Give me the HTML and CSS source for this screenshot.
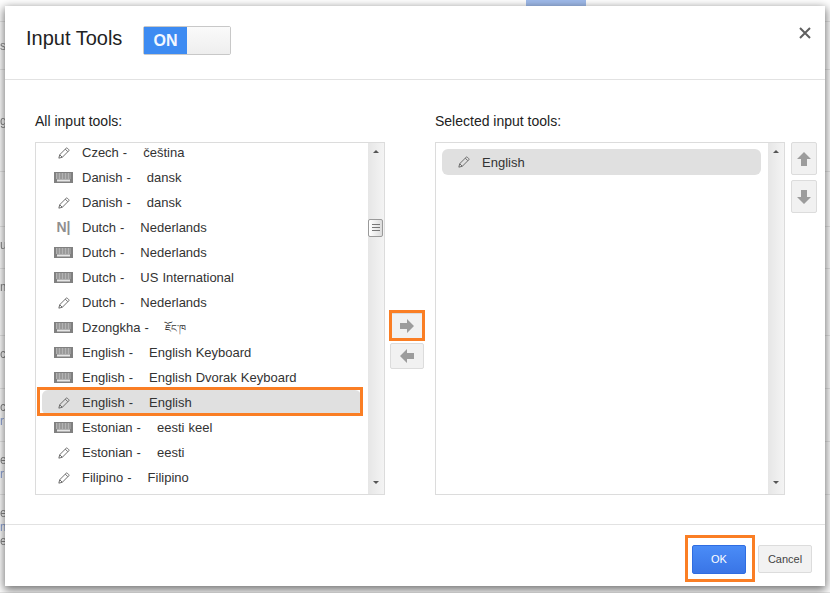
FILE: index.html
```html
<!DOCTYPE html>
<html>
<head>
  <title>Input Tools</title>
  <link rel="stylesheet" href="styles.css">
</head>
<body>
  <svg class="icon-defs" width="0" height="0">
    <symbol id="pencil" viewBox="0 0 14 14">
      <path d="M1 13l1-4 7.500-7.500a1 1 0 0 1 1.500 0l1.500 1.500a1 1 0 0 1 0 1.500L5 12zM2 9l3 3M8.500 2.500l3 3" fill="none" stroke="#666" stroke-width="1.100"/>
    </symbol>
    <symbol id="keyboard" viewBox="0 0 19 11">
      <rect width="19" height="11" fill="#808080"/>
      <path d="M2 2h15M2 4h15M2 6h15" stroke="#e6e6e6" stroke-dasharray="1 .5"/>
      <path d="M3 8.500h13" stroke="#e6e6e6" stroke-width="2"/>
    </symbol>
    <symbol id="arrow" viewBox="0 0 14 14">
      <path d="M0 4h7V0l7 7-7 7v-4H0z" fill="#9c9c9c"/>
    </symbol>
  </svg>

  <div class="backdrop">
    <div class="backdrop-row"></div>
    <div class="backdrop-row backdrop-mid">s</div>
    <div class="backdrop-row backdrop-mid">g</div>
    <div class="backdrop-row"></div>
    <div class="backdrop-row">u</div>
    <div class="backdrop-row">m</div>
    <div class="backdrop-row">c</div>
    <div class="backdrop-row">c<span class="backdrop-link">r</span></div>
    <div class="backdrop-row">e<span class="backdrop-link">r</span></div>
    <div class="backdrop-row">e<span class="backdrop-link">m</span>e</div>
  </div>
  <div class="backdrop-button"></div>

  <div class="dialog">
    <div class="dialog-header">
      <div class="dialog-title">Input Tools</div>
      <div class="toggle">
        <span class="toggle-on">ON</span>
        <span class="toggle-off"></span>
      </div>
      <svg class="close-icon" width="12" height="12" viewBox="0 0 12 12">
        <path d="M1 1l10 10M11 1L1 11" stroke="#5f5f5f" stroke-width="2"/>
      </svg>
    </div>

    <div class="dialog-body">
      <div class="column">
        <div class="column-label">All input tools:</div>
        <div class="list-box">
          <div class="list list-all">
            <div class="row"><svg class="pencil"><use href="#pencil"/></svg><span class="row-text">Czech -    čeština</span></div>
            <div class="row"><svg class="keyboard"><use href="#keyboard"/></svg><span class="row-text">Danish -    dansk</span></div>
            <div class="row"><svg class="pencil"><use href="#pencil"/></svg><span class="row-text">Danish -    dansk</span></div>
            <div class="row"><span class="ime-icon">N|</span><span class="row-text">Dutch -    Nederlands</span></div>
            <div class="row"><svg class="keyboard"><use href="#keyboard"/></svg><span class="row-text">Dutch -    Nederlands</span></div>
            <div class="row"><svg class="keyboard"><use href="#keyboard"/></svg><span class="row-text">Dutch -    US International</span></div>
            <div class="row"><svg class="pencil"><use href="#pencil"/></svg><span class="row-text">Dutch -    Nederlands</span></div>
            <div class="row"><svg class="keyboard"><use href="#keyboard"/></svg><span class="row-text">Dzongkha -    <span class="tibetan">ཇོང་ཁ</span></span></div>
            <div class="row"><svg class="keyboard"><use href="#keyboard"/></svg><span class="row-text">English -    English Keyboard</span></div>
            <div class="row"><svg class="keyboard"><use href="#keyboard"/></svg><span class="row-text">English -    English Dvorak Keyboard</span></div>
            <div class="row row-selected row-callout"><svg class="pencil"><use href="#pencil"/></svg><span class="row-text">English -    English</span></div>
            <div class="row"><svg class="keyboard"><use href="#keyboard"/></svg><span class="row-text">Estonian -    eesti keel</span></div>
            <div class="row"><svg class="pencil"><use href="#pencil"/></svg><span class="row-text">Estonian -    eesti</span></div>
            <div class="row"><svg class="pencil"><use href="#pencil"/></svg><span class="row-text">Filipino -    Filipino</span></div>
          </div>
          <div class="scrollbar">
            <span class="scroll-up"></span>
            <span class="scroll-thumb"></span>
            <span class="scroll-down"></span>
          </div>
        </div>
      </div>

      <div class="move-buttons">
        <div class="tool-button move-button move-add"><svg class="arrow"><use href="#arrow"/></svg></div>
        <div class="tool-button move-button"><svg class="arrow arrow-left"><use href="#arrow"/></svg></div>
      </div>

      <div class="column">
        <div class="column-label">Selected input tools:</div>
        <div class="list-box">
          <div class="list list-selected">
            <div class="row row-selected"><svg class="pencil"><use href="#pencil"/></svg><span class="row-text">English</span></div>
          </div>
          <div class="scrollbar">
            <span class="scroll-up"></span>
            <span class="scroll-down"></span>
          </div>
        </div>
      </div>

      <div class="order-buttons">
        <div class="tool-button order-button"><svg class="arrow arrow-up"><use href="#arrow"/></svg></div>
        <div class="tool-button order-button"><svg class="arrow arrow-down"><use href="#arrow"/></svg></div>
      </div>
    </div>

    <div class="dialog-footer">
      <div class="btn btn-ok">OK</div>
      <div class="btn btn-cancel">Cancel</div>
    </div>
  </div>
</body>
</html>
```

FILE: styles.css
```css
body {
  margin: 0;
  padding: 0;
  width: 830px;
  height: 593px;
  overflow: hidden;
  position: relative;
  background: #fff;
  font-family: "Liberation Sans", Arial, sans-serif;
  color: #333;
}
.icon-defs {
  position: absolute;
}
.backdrop {
  display: grid;
  grid-template-rows: 22px 48px 102px 55px 42px 67px 53px 53px 53px 98px;
  height: 593px;
  font-size: 12px;
  color: #8a8a8a;
}
.backdrop-row {
  border-bottom: 1px solid #e8e8e8;
  box-sizing: border-box;
  display: flex;
  flex-direction: column;
  line-height: 14px;
  padding-top: 11px;
  filter: blur(.6px);
}
.backdrop-mid {
  justify-content: center;
  padding-top: 0;
}
.backdrop-link {
  color: #8ea4d8;
}
.backdrop-button {
  position: absolute;
  left: 526px;
  top: 0;
  width: 60px;
  height: 8px;
  background: #a0bcec;
}
.dialog {
  position: absolute;
  left: 5px;
  top: 6px;
  width: 820px;
  height: 580px;
  background: #fff;
  box-shadow: 0 3px 9px 1px rgba(0, 0, 0, .55);
  display: flex;
  flex-direction: column;
}
.dialog-header {
  display: flex;
  align-items: flex-start;
  box-sizing: border-box;
  height: 74px;
  padding: 20px 14px 0 21px;
  border-bottom: 1px solid #e2e2e2;
}
.dialog-title {
  width: 117px;
  font-size: 20px;
  line-height: 24px;
  color: #222;
}
.toggle {
  display: flex;
  width: 88px;
  height: 29px;
  box-sizing: border-box;
  border: 1px solid #c8c8c8;
  border-radius: 2px;
}
.toggle-on {
  width: 43px;
  background: #3d8bf2;
  color: #f2f7ff;
  font-size: 16px;
  font-weight: bold;
  line-height: 27px;
  text-align: center;
}
.toggle-off {
  flex: 1;
  background: linear-gradient(#fafafa, #eeeeee);
}
.close-icon {
  margin-left: auto;
  margin-top: 1px;
}
.dialog-body {
  flex: 1;
  display: flex;
  padding: 0 0 0 30px;
}
.column {
  width: 350px;
}
.column-label {
  height: 62px;
  box-sizing: border-box;
  padding-top: 33px;
  font-size: 14px;
  line-height: 17px;
  color: #222;
}
.list-box {
  display: flex;
  box-sizing: border-box;
  height: 353px;
  border: 1px solid #dcdcdc;
  overflow: hidden;
}
.list {
  flex: 1;
  padding: 0 7px 0 6px;
}
.list-all {
  margin-top: -3px;
}
.list-selected {
  padding-top: 6px;
}
.row {
  position: relative;
  display: flex;
  align-items: center;
  height: 25px;
  font-size: 13px;
  line-height: 15px;
  word-spacing: .4px;
  white-space: pre;
}
.list-selected .row {
  height: 26px;
}
.row-selected {
  background: #e0e0e0;
  border-radius: 6px;
}
.row-text {
  position: relative;
  left: 40px;
  width: 0;
}
.tibetan {
  font-size: 10px;
  line-height: 0;
}
.pencil {
  width: 12px;
  height: 12px;
  margin-left: 16px;
  margin-right: -28px;
}
.keyboard {
  width: 19px;
  height: 11px;
  margin-left: 12px;
  margin-right: -31px;
}
.ime-icon {
  width: 19px;
  margin-left: 12px;
  margin-right: -31px;
  color: #8f8f8f;
  font-size: 14px;
  font-weight: bold;
  text-align: center;
}
.row-callout::after {
  content: "";
  position: absolute;
  left: -5px;
  right: -2px;
  top: -3px;
  bottom: -1px;
  border: 3px solid #fa7e24;
}
.scrollbar {
  width: 16px;
  display: flex;
  flex-direction: column;
  align-items: center;
  background: linear-gradient(to right, #e6e6e6, #f4f4f4);
  padding: 7px 0;
  box-sizing: border-box;
}
.scroll-up,
.scroll-down {
  width: 0;
  height: 0;
  border-left: 3.5px solid transparent;
  border-right: 3.5px solid transparent;
}
.scroll-up {
  border-bottom: 3px solid #555;
}
.scroll-down {
  margin-top: auto;
  margin-bottom: 3px;
  border-top: 3px solid #555;
}
.scroll-thumb {
  align-self: flex-start;
  margin-top: 66px;
  width: 15px;
  height: 18px;
  box-sizing: border-box;
  border: 1px solid #9a9a9a;
  border-radius: 2px;
  background:
    repeating-linear-gradient(#777 0 1px, transparent 1px 3px) center / 8px 9px no-repeat,
    linear-gradient(to right, #fff, #dcdcdc);
}
.move-buttons {
  width: 50px;
  display: flex;
  flex-direction: column;
  align-items: center;
  gap: 4px;
  padding: 233px 6px 0 0;
  box-sizing: border-box;
}
.tool-button {
  display: flex;
  align-items: center;
  justify-content: center;
  box-sizing: border-box;
  border: 1px solid #dcdcdc;
  border-radius: 2px;
  background: #f1f1f1;
}
.move-button {
  width: 34px;
  height: 26px;
}
.move-add {
  position: relative;
  border-bottom-color: #7f9bd0;
}
.move-add::after {
  content: "";
  position: absolute;
  left: -2px;
  right: -2px;
  top: -4px;
  bottom: -3px;
  border: 3px solid #fa7e24;
}
.order-buttons {
  display: flex;
  flex-direction: column;
  gap: 5px;
  margin-left: 6px;
  padding-top: 62px;
}
.order-button {
  width: 26px;
  height: 33px;
}
.arrow {
  width: 14px;
  height: 14px;
}
.arrow-left {
  transform: rotate(180deg);
}
.arrow-up {
  transform: rotate(-90deg);
}
.arrow-down {
  transform: rotate(90deg);
}
.dialog-footer {
  display: flex;
  justify-content: flex-end;
  align-items: flex-start;
  gap: 12px;
  height: 62px;
  box-sizing: border-box;
  padding: 20px 13px 0 0;
  border-top: 1px solid #e2e2e2;
}
.btn {
  width: 54px;
  box-sizing: border-box;
  border-radius: 2px;
  text-align: center;
  font-size: 11px;
}
.btn-ok {
  position: relative;
  height: 29px;
  line-height: 27px;
  border: 1px solid #2f6de1;
  background: linear-gradient(#4a8cf7, #3a75e6);
  color: #fff;
}
.btn-ok::after {
  content: "";
  position: absolute;
  left: -8px;
  right: -10px;
  top: -11px;
  bottom: -9px;
  border: 3px solid #fa7e24;
}
.btn-cancel {
  height: 28px;
  line-height: 26px;
  border: 1px solid #dcdcdc;
  background: #f2f2f2;
  color: #444;
}
```
